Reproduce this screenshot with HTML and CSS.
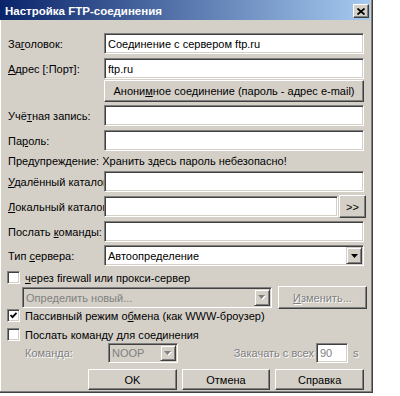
FILE: index.html
```html
<!DOCTYPE html>
<html lang="ru">
<head>
    <meta charset="UTF-8">
    <title>Настройка FTP-соединения</title>
    <link rel="stylesheet" href="styles.css">
</head>
<body>
    <div class="dialog">
        <div class="titlebar">
            <span class="title">Настройка FTP-соединения</span>
            <span class="close">
                <svg width="8" height="7" viewBox="0 0 8 7"><path d="M0.5 0.5 L7.5 6.5 M7.5 0.5 L0.5 6.5" stroke="#000" stroke-width="1.7"/></svg>
            </span>
        </div>

        <div class="content">
            <div class="row first">
                <label class="label">За<u>г</u>оловок:</label>
                <input class="field" type="text" value="Соединение с сервером ftp.ru">
            </div>
            <div class="row">
                <label class="label"><u>А</u>дрес [:Порт]:</label>
                <input class="field" type="text" value="ftp.ru">
            </div>
            <div class="anon-row">
                <button class="btn anon">Анони<u>м</u>ное соединение (пароль - адрес e-mail)</button>
            </div>
            <div class="row gap3">
                <label class="label">Учё<u>т</u>ная запись:</label>
                <input class="field" type="text" value="">
            </div>
            <div class="row">
                <label class="label">Па<u>р</u>оль:</label>
                <input class="field" type="password" value="">
            </div>
            <div class="note">Предупреждение: Хранить здесь пароль небезопасно!</div>
            <div class="row gap0">
                <label class="label"><u>У</u>далённый каталог:</label>
                <input class="field" type="text" value="">
            </div>
            <div class="row">
                <label class="label"><u>Л</u>окальный каталог:</label>
                <input class="field" type="text" value="">
                <button class="btn browse">&gt;&gt;</button>
            </div>
            <div class="row">
                <label class="label">Послать <u>к</u>оманды:</label>
                <input class="field" type="text" value="">
            </div>
            <div class="row gap3">
                <label class="label">Тип <u>с</u>ервера:</label>
                <div class="combo">
                    <span class="combo-text">Автоопределение</span>
                    <span class="combo-btn">
                        <svg width="7" height="4" viewBox="0 0 7 4"><polygon points="0,0 7,0 3.5,4" fill="#000"/></svg>
                    </span>
                </div>
            </div>

            <div class="check-row first-check">
                <span class="box"></span>
                <span><u>ч</u>ерез firewall или прокси-сервер</span>
            </div>
            <div class="row proxy-row">
                <div class="combo disabled">
                    <span class="combo-text">Определить новый...</span>
                    <span class="combo-btn">
                        <svg width="8" height="5" viewBox="0 0 8 5"><polygon points="1,1 8,1 4.5,5" fill="#fff"/><polygon points="0,0 7,0 3.5,4" fill="#808080"/></svg>
                    </span>
                </div>
                <button class="btn change" disabled><u>И</u>зменить...</button>
            </div>
            <div class="check-row passive">
                <span class="box checked">
                    <svg width="9" height="9" viewBox="0 0 9 9"><path d="M1.5 4 L3.5 6.2 L7.5 1.8" fill="none" stroke="#000" stroke-width="1.8"/></svg>
                </span>
                <span>Пассивный режим о<u>б</u>мена (как WWW-броузер)</span>
            </div>
            <div class="check-row keepalive">
                <span class="box"></span>
                <span>Послать команду для соединения</span>
            </div>
            <div class="cmd-row">
                <span class="cmd-label dim">Команда:</span>
                <div class="combo disabled small">
                    <span class="combo-text">NOOP</span>
                    <span class="combo-btn">
                        <svg width="8" height="5" viewBox="0 0 8 5"><polygon points="1,1 8,1 4.5,5" fill="#fff"/><polygon points="0,0 7,0 3.5,4" fill="#808080"/></svg>
                    </span>
                </div>
                <span class="spacer"></span>
                <span class="dim">Закачать с всех</span>
                <input class="field seconds" type="text" value="90" disabled>
                <span class="unit dim">s</span>
            </div>

            <div class="buttons">
                <button class="btn action">OK</button>
                <button class="btn action">Отмена</button>
                <button class="btn action">Справка</button>
            </div>
        </div>
    </div>
</body>
</html>
```

FILE: styles.css
```css
body {
    margin: 0;
    background: #fff;
    font-family: "Liberation Sans", Arial, sans-serif;
    font-size: 11px;
    color: #000;
}
.dialog {
    width: 373px;
    height: 393px;
    box-sizing: border-box;
    background: #d4d0c8;
    border-right: 1px solid #404040;
    border-bottom: 1px solid #404040;
    box-shadow: inset -1px -1px 0 #808080, inset 1px 0 0 #fff;
}
.titlebar {
    height: 20px;
    box-sizing: border-box;
    margin-right: 2px;
    padding: 2px 1px 0 5px;
    display: flex;
    align-items: center;
    justify-content: space-between;
    background: linear-gradient(to right, #0a246a, #a6caf0);
}
.title {
    color: #fff;
    font-weight: bold;
    font-size: 11.5px;
}
.close {
    width: 16px;
    height: 14px;
    box-sizing: border-box;
    display: flex;
    align-items: center;
    justify-content: center;
    background: #d4d0c8;
    border: 1px solid;
    border-color: #fff #404040 #404040 #fff;
    box-shadow: inset -1px -1px 0 #808080;
}
.content {
    padding: 13px 8px 0 8px;
}
.row {
    display: flex;
    align-items: center;
    height: 21px;
    margin-top: 4px;
}
.row.first {
    margin-top: 0;
}
.row.gap3 {
    margin-top: 3px;
}
.row.gap0 {
    margin-top: 0;
}
.label {
    width: 96px;
    flex: none;
    white-space: nowrap;
    overflow: hidden;
}
.field {
    flex: 1;
    width: 0;
    height: 21px;
    box-sizing: border-box;
    margin: 0;
    padding: 0 3px;
    font: inherit;
    color: #000;
    background: #fff;
    border: 1px solid;
    border-color: #808080 #fff #fff #808080;
    box-shadow: inset 1px 1px 0 #404040, inset -1px -1px 0 #d4d0c8;
    outline: none;
}
.btn {
    font: inherit;
    color: #000;
    background: #d4d0c8;
    border: 1px solid;
    border-color: #fff #404040 #404040 #fff;
    box-shadow: inset -1px -1px 0 #808080;
    padding: 0;
    margin: 0;
}
.btn:disabled {
    color: #808080;
    text-shadow: 1px 1px 0 #fff;
}
.anon-row {
    margin: 1px 0 0 96px;
}
.anon {
    width: 100%;
    height: 22px;
}
.note {
    height: 20px;
    display: flex;
    align-items: center;
}
.browse {
    width: 27px;
    height: 23px;
    margin: 0 -2px 0 1px;
    flex: none;
}
.combo {
    flex: 1;
    height: 21px;
    box-sizing: border-box;
    display: flex;
    padding: 1px;
    background: #fff;
    border: 1px solid;
    border-color: #808080 #fff #fff #808080;
    box-shadow: inset 1px 1px 0 #404040, inset -1px -1px 0 #d4d0c8;
}
.combo-text {
    flex: 1;
    padding-left: 2px;
    display: flex;
    align-items: center;
    white-space: nowrap;
    overflow: hidden;
}
.combo-btn {
    width: 16px;
    flex: none;
    box-sizing: border-box;
    display: flex;
    align-items: center;
    justify-content: center;
    background: #d4d0c8;
    border: 1px solid;
    border-color: #d4d0c8 #404040 #404040 #d4d0c8;
    box-shadow: inset 1px 1px 0 #fff, inset -1px -1px 0 #808080;
}
.combo.disabled {
    background: #d4d0c8;
}
.combo.disabled .combo-text {
    color: #808080;
}
.check-row {
    display: flex;
    align-items: center;
    gap: 5px;
    height: 17px;
    margin-left: -1px;
}
.first-check {
    margin-top: 3px;
}
.passive {
    margin-top: -1px;
}
.keepalive {
    margin-top: 2px;
}
.box {
    width: 13px;
    height: 13px;
    flex: none;
    box-sizing: border-box;
    display: flex;
    align-items: center;
    justify-content: center;
    background: #fff;
    border: 1px solid;
    border-color: #808080 #fff #fff #808080;
    box-shadow: inset 1px 1px 0 #404040, inset -1px -1px 0 #d4d0c8;
}
.proxy-row {
    margin: 1px -3px 0 14px;
    gap: 6px;
}
.change {
    width: 89px;
    height: 23px;
    flex: none;
}
.cmd-row {
    display: flex;
    align-items: center;
    height: 20px;
    padding-left: 17px;
}
.cmd-label {
    width: 83px;
    flex: none;
}
.dim {
    color: #808080;
    text-shadow: 1px 1px 0 #fff;
}
.combo.small {
    flex: none;
    width: 70px;
    height: 20px;
}
.spacer {
    flex: 1;
}
.seconds {
    flex: none;
    width: 32px;
    height: 20px;
    margin-left: 2px;
    color: #808080;
}
.unit {
    width: 16px;
    padding-left: 5px;
    box-sizing: border-box;
}
.buttons {
    display: flex;
    gap: 5px;
    height: 21px;
    margin-top: 6px;
    padding-left: 80px;
}
.action {
    width: 89px;
    height: 21px;
}
```
